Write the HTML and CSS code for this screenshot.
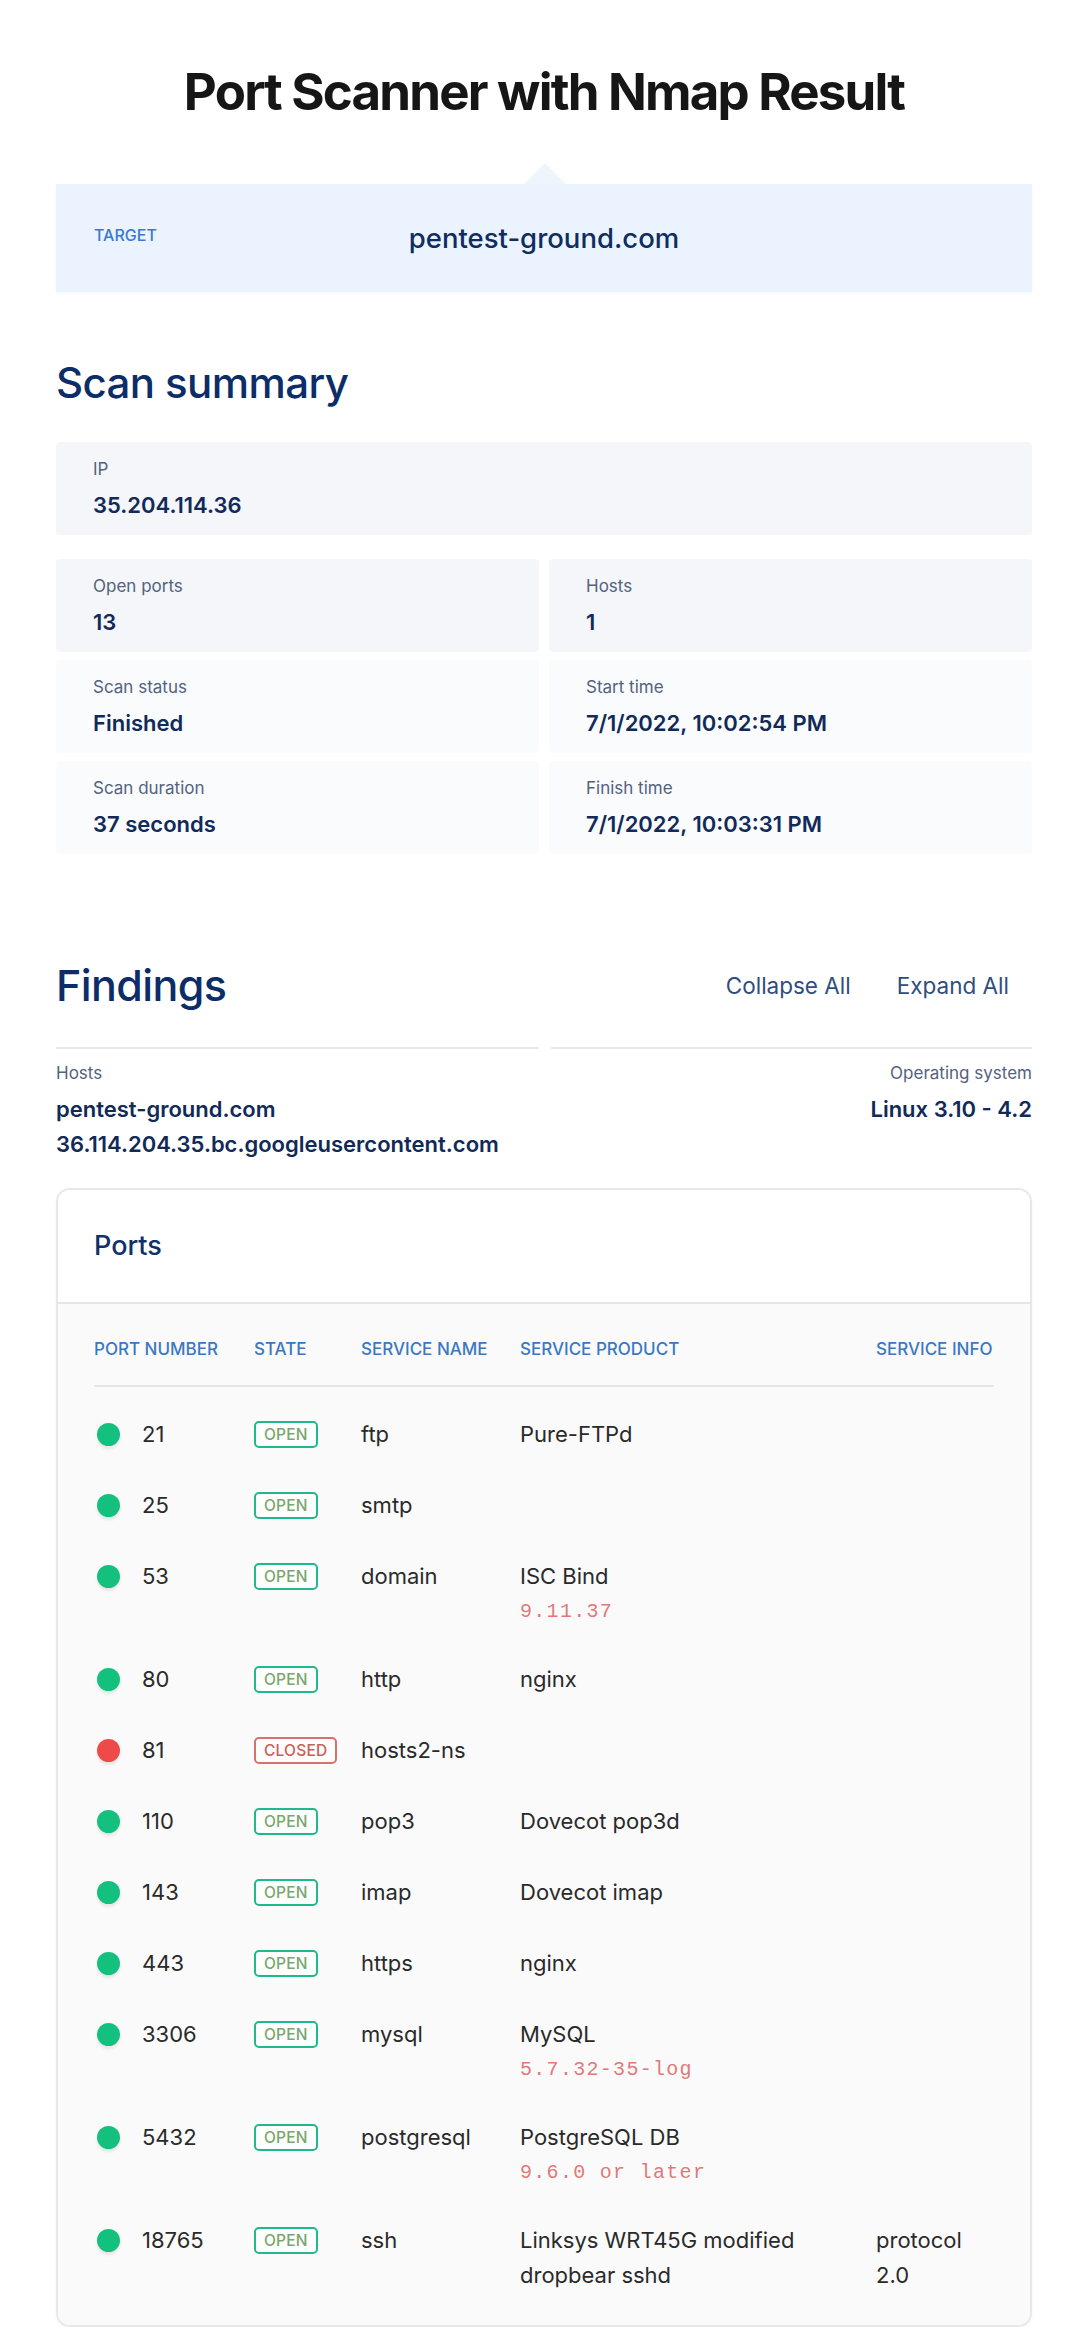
FILE: index.html
```html
<!DOCTYPE html>
<html lang="en">
<head>
<meta charset="utf-8">
<title>Port Scanner with Nmap Result</title>
<link rel="stylesheet" href="styles.css">
</head>
<body>
<main class="page">
  <h1 class="title">Port Scanner with Nmap Result</h1>

  <section class="target">
    <span class="target-label">TARGET</span>
    <span class="target-value">pentest-ground.com</span>
  </section>

  <h2 class="section-title summary-title">Scan summary</h2>

  <div class="stat stat-wide">
    <div class="stat-label">IP</div>
    <div class="stat-value">35.204.114.36</div>
  </div>

  <div class="stat-grid">
    <div class="stat stat-dark">
      <div class="stat-label">Open ports</div>
      <div class="stat-value">13</div>
    </div>
    <div class="stat stat-dark">
      <div class="stat-label">Hosts</div>
      <div class="stat-value">1</div>
    </div>
    <div class="stat stat-light">
      <div class="stat-label">Scan status</div>
      <div class="stat-value">Finished</div>
    </div>
    <div class="stat stat-light">
      <div class="stat-label">Start time</div>
      <div class="stat-value">7/1/2022, 10:02:54 PM</div>
    </div>
    <div class="stat stat-light">
      <div class="stat-label">Scan duration</div>
      <div class="stat-value">37 seconds</div>
    </div>
    <div class="stat stat-light">
      <div class="stat-label">Finish time</div>
      <div class="stat-value">7/1/2022, 10:03:31 PM</div>
    </div>
  </div>

  <div class="findings-head">
    <h2 class="section-title">Findings</h2>
    <div class="actions">
      <button class="action">Collapse All</button>
      <button class="action">Expand All</button>
    </div>
  </div>

  <div class="host-info">
    <div class="host-col">
      <div class="host-label">Hosts</div>
      <div class="host-value">pentest-ground.com</div>
      <div class="host-value">36.114.204.35.bc.googleusercontent.com</div>
    </div>
    <div class="host-col host-col-right">
      <div class="host-label">Operating system</div>
      <div class="host-value">Linux 3.10 - 4.2</div>
    </div>
  </div>

  <section class="ports-card">
    <div class="ports-header">
      <h3 class="ports-title">Ports</h3>
    </div>
    <div class="ports-body">
      <div class="ports-table">
        <div class="row row-head">
          <div class="cell">PORT NUMBER</div>
          <div class="cell">STATE</div>
          <div class="cell">SERVICE NAME</div>
          <div class="cell">SERVICE PRODUCT</div>
          <div class="cell">SERVICE INFO</div>
        </div>

        <div class="row">
          <div class="cell port"><span class="dot dot-open"></span>21</div>
          <div class="cell"><span class="badge badge-open">OPEN</span></div>
          <div class="cell">ftp</div>
          <div class="cell product">Pure-FTPd</div>
          <div class="cell info"></div>
        </div>

        <div class="row">
          <div class="cell port"><span class="dot dot-open"></span>25</div>
          <div class="cell"><span class="badge badge-open">OPEN</span></div>
          <div class="cell">smtp</div>
          <div class="cell product"></div>
          <div class="cell info"></div>
        </div>

        <div class="row">
          <div class="cell port"><span class="dot dot-open"></span>53</div>
          <div class="cell"><span class="badge badge-open">OPEN</span></div>
          <div class="cell">domain</div>
          <div class="cell product">ISC Bind<code class="version">9.11.37</code></div>
          <div class="cell info"></div>
        </div>

        <div class="row">
          <div class="cell port"><span class="dot dot-open"></span>80</div>
          <div class="cell"><span class="badge badge-open">OPEN</span></div>
          <div class="cell">http</div>
          <div class="cell product">nginx</div>
          <div class="cell info"></div>
        </div>

        <div class="row">
          <div class="cell port"><span class="dot dot-closed"></span>81</div>
          <div class="cell"><span class="badge badge-closed">CLOSED</span></div>
          <div class="cell">hosts2-ns</div>
          <div class="cell product"></div>
          <div class="cell info"></div>
        </div>

        <div class="row">
          <div class="cell port"><span class="dot dot-open"></span>110</div>
          <div class="cell"><span class="badge badge-open">OPEN</span></div>
          <div class="cell">pop3</div>
          <div class="cell product">Dovecot pop3d</div>
          <div class="cell info"></div>
        </div>

        <div class="row">
          <div class="cell port"><span class="dot dot-open"></span>143</div>
          <div class="cell"><span class="badge badge-open">OPEN</span></div>
          <div class="cell">imap</div>
          <div class="cell product">Dovecot imap</div>
          <div class="cell info"></div>
        </div>

        <div class="row">
          <div class="cell port"><span class="dot dot-open"></span>443</div>
          <div class="cell"><span class="badge badge-open">OPEN</span></div>
          <div class="cell">https</div>
          <div class="cell product">nginx</div>
          <div class="cell info"></div>
        </div>

        <div class="row">
          <div class="cell port"><span class="dot dot-open"></span>3306</div>
          <div class="cell"><span class="badge badge-open">OPEN</span></div>
          <div class="cell">mysql</div>
          <div class="cell product">MySQL<code class="version">5.7.32-35-log</code></div>
          <div class="cell info"></div>
        </div>

        <div class="row">
          <div class="cell port"><span class="dot dot-open"></span>5432</div>
          <div class="cell"><span class="badge badge-open">OPEN</span></div>
          <div class="cell">postgresql</div>
          <div class="cell product">PostgreSQL DB<code class="version">9.6.0 or later</code></div>
          <div class="cell info"></div>
        </div>

        <div class="row">
          <div class="cell port"><span class="dot dot-open"></span>18765</div>
          <div class="cell"><span class="badge badge-open">OPEN</span></div>
          <div class="cell">ssh</div>
          <div class="cell product">Linksys WRT45G modified dropbear sshd</div>
          <div class="cell info">protocol 2.0</div>
        </div>
      </div>
    </div>
  </section>
</main>
</body>
</html>
```

FILE: styles.css
```css
* {
  box-sizing: border-box;
}

body {
  margin: 0;
  background: #ffffff;
  font-family: Inter, "Noto Sans", "Liberation Sans", sans-serif;
  color: #0f2a5a;
}

.page {
  width: 976px;
  margin: 0 auto;
  padding-top: 64px;
  padding-bottom: 40px;
}

.title {
  margin: 0;
  text-align: center;
  font-size: 51px;
  line-height: 56px;
  font-weight: 700;
  letter-spacing: -1.8px;
  color: #161616;
}

/* target */
.target {
  position: relative;
  margin-top: 64px;
  height: 108px;
  background: #ebf4fe;
  display: flex;
  align-items: center;
  padding-left: 38px;
  box-shadow: 0 1px 3px rgba(30, 60, 110, 0.04);
}

.target::before {
  content: "";
  position: absolute;
  left: 468px;
  top: -21px;
  border-left: 21px solid transparent;
  border-right: 21px solid transparent;
  border-bottom: 21px solid #eef5fd;
}

.target-label {
  font-size: 16px;
  font-weight: 500;
  color: #3a79cf;
  margin-top: -6px;
}

.target-value {
  position: absolute;
  left: 0;
  right: 0;
  text-align: center;
  font-size: 27.5px;
  font-weight: 500;
  color: #0f2d5f;
  pointer-events: none;
}

/* section titles */
.section-title {
  margin: 0;
  font-size: 43px;
  line-height: 52px;
  font-weight: 500;
  letter-spacing: -0.6px;
  color: #0c2d68;
}

.summary-title {
  margin-top: 65px;
  font-size: 42px;
}

/* stats */
.stat {
  height: 93px;
  padding: 17px 37px 0;
  border-radius: 4px;
}

.stat-wide {
  margin-top: 33px;
  background: #f4f6fa;
}

.stat-dark {
  background: #f4f6fa;
}

.stat-light {
  background: #fafbfc;
}

.stat-label {
  font-size: 17px;
  line-height: 20px;
  color: #53627f;
}

.stat-value {
  margin-top: 13px;
  font-size: 22px;
  line-height: 26px;
  font-weight: 600;
  color: #112a58;
}

.stat-grid {
  margin-top: 24px;
  display: grid;
  grid-template-columns: 1fr 1fr;
  gap: 8px 10px;
}

/* findings */
.findings-head {
  margin-top: 105px;
  display: flex;
  justify-content: space-between;
  align-items: center;
}

.actions {
  display: flex;
}

.action {
  border: 0;
  background: none;
  font-family: inherit;
  font-size: 22.5px;
  color: #2f4d80;
  padding: 6px 23px;
  cursor: pointer;
}

.host-info {
  margin-top: 36px;
  display: grid;
  grid-template-columns: 1fr 1fr;
  column-gap: 13px;
}

.host-col {
  border-top: 2px solid #e4e6ea;
  padding-top: 14px;
}

.host-col-right {
  text-align: right;
}

.host-label {
  font-size: 17px;
  line-height: 20px;
  color: #53627f;
  margin-bottom: 9px;
}

.host-value {
  font-size: 22px;
  line-height: 35px;
  font-weight: 600;
  color: #112a58;
}

/* ports card */
.ports-card {
  margin-top: 26px;
  border: 2px solid #e8e8e8;
  border-radius: 14px;
  overflow: hidden;
  box-shadow: 0 1px 4px rgba(0, 0, 0, 0.04);
}

.ports-header {
  height: 114px;
  background: #ffffff;
  border-bottom: 2px solid #e6e6e6;
  display: flex;
  align-items: center;
  padding-left: 36px;
}

.ports-title {
  margin: 0;
  font-size: 27px;
  font-weight: 500;
  color: #10306a;
  margin-top: -2px;
}

.ports-body {
  background: #fafafa;
  padding: 34px 36px 14px;
}

.row {
  display: grid;
  grid-template-columns: 160px 107px 159px 356px 1fr;
  align-items: start;
  padding: 18px 0;
  font-size: 22px;
  line-height: 35px;
  color: #2a2a2a;
}

.row-head {
  padding: 0 0 25px;
  border-bottom: 2px solid #e6e6e6;
  margin-bottom: 12px;
  font-size: 17px;
  line-height: 22px;
  font-weight: 500;
  color: #3a78c3;
}

.cell {
  min-width: 0;
}

.port {
  display: flex;
  align-items: center;
  height: 35px;
}

.dot {
  width: 23px;
  height: 23px;
  border-radius: 50%;
  margin-left: 3px;
  margin-right: 22px;
  box-shadow: 0 3px 3px rgba(0, 0, 0, 0.08);
  flex: none;
}

.dot-open {
  background: #14c07e;
}

.dot-closed {
  background: #ee4a4a;
}

.badge {
  display: inline-block;
  vertical-align: top;
  margin-top: 4px;
  height: 27px;
  padding: 0 8px;
  border: 2px solid;
  border-radius: 5px;
  font-size: 15.5px;
  line-height: 23px;
  font-weight: 500;
  letter-spacing: 0.2px;
}

.badge-open {
  border-color: #1fb98a;
  color: #7ba66d;
  background: #fcfffd;
}

.badge-closed {
  border-color: #d5736b;
  color: #c8605a;
  background: #fffcfc;
}

.product {
  padding-right: 30px;
}

.version {
  display: block;
  margin-top: 4px;
  font-family: "Liberation Mono", "DejaVu Sans Mono", monospace;
  font-size: 20px;
  line-height: 28px;
  letter-spacing: 1.3px;
  color: #e07a7a;
}

.info {
  max-width: 112px;
}
```
